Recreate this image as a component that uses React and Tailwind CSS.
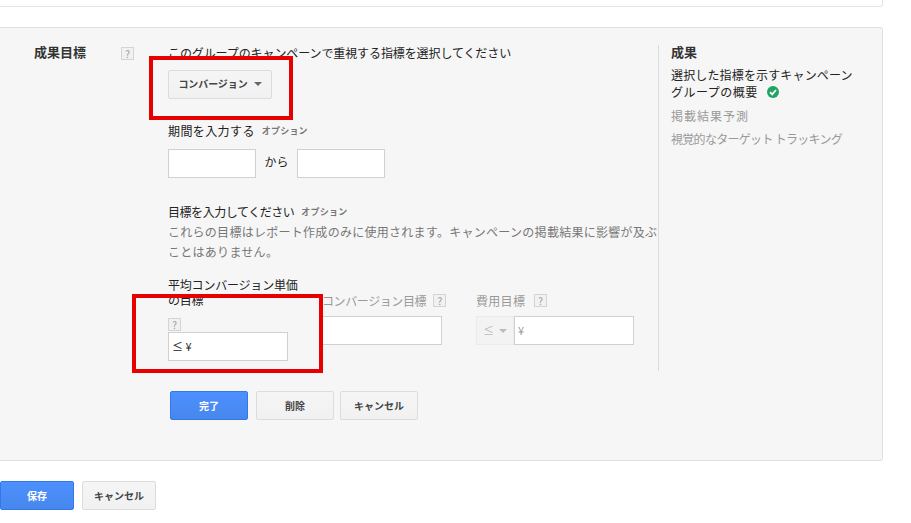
const font = { fontFamily: '"Noto Sans CJK JP", "Noto Sans", sans-serif' };

function Help({ className = "" }) {
  return (
    <span className={"flex h-[13px] w-[13px] shrink-0 items-center justify-center border border-[#d4d4d4] bg-[#f1f1f1] text-[10px] leading-none text-[#999] " + className}>?</span>
  );
}

function Caret({ color = "border-t-[#666]" }) {
  return <span className={"inline-block h-0 w-0 border-x-[4px] border-t-[4px] border-x-transparent " + color} />;
}

function Btn({ children, primary, className = "" }) {
  return (
    <button className={
      "flex h-[29px] items-center justify-center rounded-[2px] border text-[10px] font-bold " +
      (primary
        ? "border-[#3079ed] bg-gradient-to-b from-[#4d90fe] to-[#4787ed] text-white "
        : "border-[#dcdcdc] bg-gradient-to-b from-[#f5f5f5] to-[#f1f1f1] text-[#444] ") + className
    }>{children}</button>
  );
}

function Field({ className = "", children }) {
  return <div className={"flex h-[29px] items-center border border-[#d0d0d0] bg-white pl-[3px] text-[11px] " + className}>{children}</div>;
}

function Optional() {
  return <span className="text-[9px] font-bold tracking-[0.2px] text-[#777]">オプション</span>;
}

export default function App() {
  return (
    <div style={font} className="relative h-[523px] w-[911px] overflow-hidden bg-white text-[12px] text-[#222]">
      <div className="h-[7px] w-[883px] rounded-br-[3px] border-r border-b border-[#e5e5e5]" />

      <div className="mt-[20px] flex h-[434px] w-[883px] flex-col rounded-r-[3px] border-y border-r border-[#e0e0e0] bg-[#f6f6f6] pt-[17px]">
        <div className="flex pl-[34px]">
          <div className="flex w-[134px] shrink-0 items-start">
            <span className="-mt-[1px] w-[87px] text-[13px] leading-[15px] font-bold text-[#333]">成果目標</span>
            <Help className="mt-[2px]" />
          </div>

          <div className="h-[326px] w-[491px] shrink-0 border-r border-[#dcdcdc]">
            <p className="h-[15px] leading-[15px] tracking-[-0.1px] whitespace-nowrap">このグループのキャンペーンで重視する指標を選択してください</p>
            <Btn className="mt-[10px] w-[104px] gap-[6px] pb-[2px] tracking-[-0.1px]">コンバージョン <Caret /></Btn>

            <p className="mt-[24px] flex h-[16px] items-center gap-[7px] leading-[16px] tracking-[0.4px]">
              期間を入力する <Optional />
            </p>
            <div className="mt-[10px] flex items-center">
              <Field className="w-[88px]" />
              <span className="w-[41px] pb-[4px] text-center">から</span>
              <Field className="w-[88px]" />
            </div>

            <p className="mt-[26px] flex h-[16px] items-center gap-[7px] leading-[16px] tracking-[-0.45px]">
              目標を入力してください <Optional />
            </p>
            <p className="mt-[2px] leading-[20px] tracking-[0.28px] whitespace-nowrap text-[#777]">
              これらの目標はレポート作成のみに使用されます。キャンペーンの掲載結果に影響が及ぶ<br />ことはありません。
            </p>

            <div className="mt-[15px] flex items-start">
              <div className="w-[130px] shrink-0">
                <p className="leading-[15px] tracking-[-0.2px] whitespace-nowrap">平均コンバージョン単価<br />の目標</p>
                <Help className="mt-[11px]" />
                <Field className="mt-[1px] w-[120px]">≤ ¥</Field>
              </div>
              <div className="ml-[24px] w-[120px] shrink-0 pt-[16px]">
                <p className="flex h-[15px] items-center gap-[7px] leading-[15px] tracking-[-0.4px] whitespace-nowrap text-[#999]">コンバージョン目標 <Help /></p>
                <Field className="mt-[8px] w-[120px]" />
              </div>
              <div className="ml-[34px] w-[158px] shrink-0 pt-[16px]">
                <p className="flex h-[15px] items-center gap-[9px] leading-[15px] tracking-[0.3px] text-[#999]">費用目標 <Help /></p>
                <div className="mt-[8px] flex">
                  <div className="flex h-[29px] w-[38px] items-center justify-center gap-[5px] border border-[#ebebeb] bg-[#f3f3f3] text-[11px] text-[#bbb]">≤ <Caret color="border-t-[#bbb]" /></div>
                  <Field className="w-[120px] text-[#999]">¥</Field>
                </div>
              </div>
            </div>
          </div>

          <div className="pl-[12px]">
            <p className="-mt-[1px] text-[13px] leading-[15px] font-bold text-[#333]">成果</p>
            <p className="mt-[7px] w-[195px] leading-[17px] tracking-[0.15px] whitespace-nowrap">
              選択した指標を示すキャンペーン<br />
              <span className="inline-flex items-center gap-[9px] tracking-[0.5px]">グループの概要
                <svg width="12" height="12" viewBox="0 0 12 12"><circle cx="6" cy="6" r="6" fill="#1fa463" /><path d="M3 6.2 5.2 8.4 9 4" fill="none" stroke="#fff" strokeWidth="1.8" /></svg>
              </span>
            </p>
            <p className="mt-[7px] leading-[17px] tracking-[1px] text-[#999]">掲載結果予測</p>
            <p className="mt-[6px] leading-[17px] tracking-[-0.7px] whitespace-nowrap text-[#999]">視覚的なターゲット トラッキング</p>
          </div>
        </div>

        <div className="mt-[20px] ml-[170px] flex">
          <Btn primary className="w-[78px]">完了</Btn>
          <Btn className="ml-[8px] w-[78px]">削除</Btn>
          <Btn className="ml-[6px] w-[78px]">キャンセル</Btn>
        </div>
      </div>

      <div className="mt-[20px] flex">
        <Btn primary className="w-[74px]">保存</Btn>
        <Btn className="ml-[8px] w-[74px]">キャンセル</Btn>
      </div>

      <div className="absolute top-[56px] left-[149px] h-[64px] w-[144px] border-[4px] border-[#e60000]" />
      <div className="absolute top-[294px] left-[132px] h-[79px] w-[191px] border-[4px] border-[#e60000]" />
    </div>
  );
}
